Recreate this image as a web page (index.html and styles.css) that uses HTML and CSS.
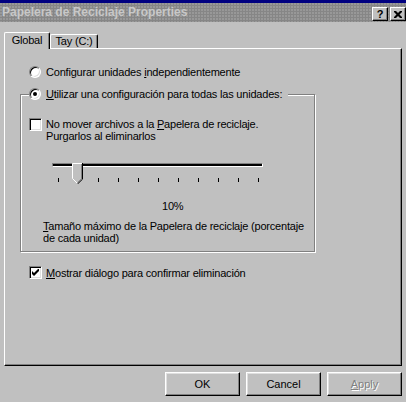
FILE: index.html
```html
<!DOCTYPE html>
<html lang="es">
<head>
<meta charset="utf-8">
<title>Papelera de Reciclaje Properties</title>
<link rel="stylesheet" href="styles.css">
</head>
<body>
<div class="top-strip"></div>
<div class="titlebar">
  <span class="title">Papelera de Reciclaje Properties</span>
  <div class="tb-buttons">
    <div class="tb-btn help">?</div>
    <div class="tb-btn close">
      <svg width="8" height="7" viewBox="0 0 8 7"><path d="M0 0h2l2 2 2-2h2v1l-2.5 2.5L8 6v1H6L4 5 2 7H0V6l2.5-2.5L0 1z" fill="#000"/></svg>
    </div>
  </div>
</div>
<div class="main">
  <div class="tabs">
    <div class="tab active">Global</div>
    <div class="tab">Tay (C:)</div>
  </div>
  <div class="panel">
    <div class="row opt1"><span class="radio"></span><span>Configurar unidades <u>i</u>ndependientemente</span></div>
    <fieldset class="group">
      <legend class="row legend"><span class="radio checked"></span><span><u>U</u>tilizar una configuración para todas las unidades:</span></legend>
      <div class="check-row first"><span class="check"></span><span class="label">No mover archivos a la <u>P</u>apelera de reciclaje.<br>Purgarlos al eliminarlos</span></div>
      <div class="slider">
        <div class="track"></div>
        <svg class="thumb" width="11" height="21" viewBox="0 0 11 21">
          <polygon points="0,0 11,0 11,16 5.5,21 0,16" fill="#c0c0c0"/>
          <polyline points="0.5,15.5 0.5,0.5 10,0.5" fill="none" stroke="#fff"/>
          <polyline points="0.5,15.5 5,20" fill="none" stroke="#fff"/>
          <polyline points="9.5,1 9.5,15.8 5.5,19.6" fill="none" stroke="#808080"/>
          <polyline points="10.5,0 10.5,16.2 5.5,21" fill="none" stroke="#000"/>
        </svg>
        <div class="ticks"><i></i><i></i><i></i><i></i><i></i><i></i><i></i><i></i><i></i><i></i><i></i></div>
      </div>
      <div class="pct">10%</div>
      <p class="desc"><u>T</u>amaño máximo de la Papelera de reciclaje (porcentaje<br>de cada unidad)</p>
    </fieldset>
    <div class="check-row opt2"><span class="check">
      <svg width="7" height="7" viewBox="0 0 7 7"><path d="M0 2l2 2 5-5v3L2 7 0 5z" fill="#000"/></svg>
    </span><span class="label"><u>M</u>ostrar diálogo para confirmar eliminación</span></div>
  </div>
  <div class="buttons">
    <button class="btn">OK</button>
    <button class="btn">Cancel</button>
    <button class="btn disabled"><u>A</u>pply</button>
  </div>
</div>
</body>
</html>
```
FILE: styles.css
```css
html, body {
  margin: 0;
  padding: 0;
}
body {
  width: 406px;
  height: 402px;
  overflow: hidden;
  background: #c0c0c0;
  font-family: "Liberation Sans", Arial, sans-serif;
  font-size: 11px;
  color: #000;
}
.top-strip {
  height: 3px;
  background: #000080;
}
.titlebar {
  height: 19px;
  background-color: #868686;
  background-image: radial-gradient(circle at 1px 1px, #9a9a9a 0.7px, transparent 0.8px);
  background-size: 3px 3px;
  display: flex;
  align-items: flex-start;
  justify-content: space-between;
}
.title {
  color: #c8c8c8;
  font-weight: bold;
  font-size: 12px;
  line-height: 16px;
  padding-left: 2px;
  padding-top: 1px;
}
.tb-buttons {
  display: flex;
  gap: 2px;
  padding-top: 4px;
}
.tb-btn {
  width: 16px;
  height: 14px;
  box-sizing: border-box;
  background: #c0c0c0;
  border: 1px solid;
  border-color: #fff #000 #000 #fff;
  box-shadow: inset -1px -1px #808080;
  display: flex;
  align-items: center;
  justify-content: center;
  font-weight: bold;
  font-size: 11px;
  line-height: 12px;
}
.close svg { display: block; }
.main {
  padding-top: 10px;
}
.panel, .tabs, .buttons {
  letter-spacing: -0.2px;
}
.tabs {
  display: flex;
  align-items: flex-end;
  margin-left: 4px;
  height: 17px;
  position: relative;
  z-index: 1;
}
.tab {
  box-sizing: border-box;
  height: 14px;
  margin-bottom: 1px;
  width: 48px;
  border: 1px solid;
  border-bottom: none;
  border-color: #fff #000 #000 #fff;
  border-radius: 2px 2px 0 0;
  box-shadow: inset -1px 0 #808080;
  background: #c0c0c0;
  text-align: center;
  line-height: 13px;
}
.tab.active {
  height: 17px;
  margin-bottom: 0;
  width: 46px;
  line-height: 14px;
}
.panel {
  box-sizing: border-box;
  width: 398px;
  height: 318px;
  margin-left: 4px;
  margin-top: -1px;
  border: 1px solid;
  border-color: #fff #000 #000 #fff;
  box-shadow: inset -1px -1px #808080;
  display: flex;
  flex-direction: column;
  align-items: flex-start;
}
.row {
  display: flex;
  align-items: center;
  gap: 5px;
  height: 12px;
  line-height: 12px;
  white-space: nowrap;
}
.opt1 {
  margin: 17px 0 0 24px;
}
.radio {
  box-sizing: border-box;
  width: 12px;
  height: 12px;
  border-radius: 50%;
  border: 1px solid;
  border-color: #808080 #fff #fff #808080;
  box-shadow: inset 1px 1px #000, inset -1px -1px #dfdfdf;
  background: #fff;
  display: flex;
  align-items: center;
  justify-content: center;
  flex: none;
}
.radio.checked::after {
  content: "";
  width: 4px;
  height: 4px;
  border-radius: 50%;
  background: #000;
}
.group {
  box-sizing: border-box;
  width: 295px;
  height: 164px;
  margin: 10px 0 0 15px;
  padding: 0;
  border: 1px solid #808080;
  box-shadow: inset 1px 1px #fff, 1px 1px #fff;
  min-width: 0;
}
.legend {
  margin-left: 8px;
  padding: 0 6px 0 0;
  background: #c0c0c0;
}
.check-row {
  display: flex;
  align-items: flex-start;
  gap: 4px;
  white-space: nowrap;
}
.check-row .label {
  line-height: 12px;
}
.check-row.first {
  margin: 18px 0 0 8px;
}
.check {
  box-sizing: border-box;
  width: 13px;
  height: 13px;
  border: 1px solid;
  border-color: #808080 #fff #fff #808080;
  box-shadow: inset 1px 1px #000, inset -1px -1px #dfdfdf;
  background: #fff;
  display: flex;
  align-items: center;
  justify-content: center;
  flex: none;
}
.check svg { display: block; }
.slider {
  position: relative;
  width: 211px;
  height: 27px;
  margin: 21px 0 0 31px;
}
.track {
  box-sizing: border-box;
  height: 4px;
  margin-top: 8px;
  border: 1px solid;
  border-color: #808080 #fff #fff #808080;
  background: #000;
}
.thumb {
  position: absolute;
  left: 20px;
  top: 0;
  display: block;
}
.ticks {
  display: flex;
  justify-content: space-between;
  width: 201px;
  margin: 11px 0 0 6px;
}
.ticks i {
  width: 1px;
  height: 4px;
  background: #000;
}
.pct {
  margin: 10px 0 0 141px;
  line-height: 13px;
}
.desc {
  margin: 7px 0 0 22px;
  line-height: 12px;
  white-space: nowrap;
}
.check-row.opt2 {
  margin: 14px 0 0 24px;
  align-items: center;
}
.buttons {
  display: flex;
  justify-content: flex-end;
  gap: 6px;
  margin-top: 6px;
  padding-right: 4px;
}
.btn {
  box-sizing: border-box;
  width: 75px;
  height: 24px;
  padding: 0;
  margin: 0;
  font-family: "Liberation Sans", Arial, sans-serif;
  font-size: 11px;
  color: #000;
  background: #c0c0c0;
  border: 1px solid;
  border-color: #fff #000 #000 #fff;
  box-shadow: inset -1px -1px #808080, inset 1px 1px #dfdfdf;
  border-radius: 0;
}
.btn.disabled {
  color: #808080;
  text-shadow: 1px 1px #fff;
}
```
